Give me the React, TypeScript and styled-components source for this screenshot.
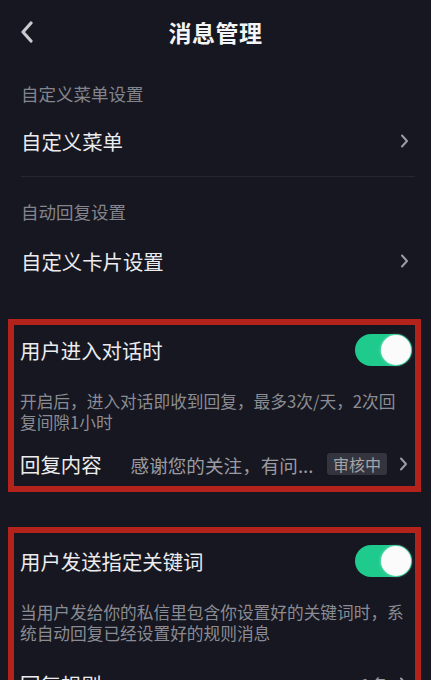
import styled, { createGlobalStyle } from "styled-components";

const GlobalStyle = createGlobalStyle`
  body {
    margin: 0;
    background: #161720;
    font-family: "Noto Sans CJK SC", "Noto Sans", sans-serif;
    color: #ececef;
  }
`;

function Chevron() {
  return (
    <svg width="9" height="14" viewBox="0 0 9 14">
      <path d="M2 1.5 L7 7 L2 12.5" fill="none" stroke="#9c9da3" strokeWidth="2" strokeLinecap="round" strokeLinejoin="round" />
    </svg>
  );
}

function Toggle() {
  return (
    <Switch>
      <Knob />
    </Switch>
  );
}

export default function App() {
  return (
    <Page>
      <GlobalStyle />
      <Header>
        <BackButton>
          <svg width="14" height="22" viewBox="0 0 14 22">
            <path d="M11 2 L3 11 L11 20" fill="none" stroke="#c9c9ce" strokeWidth="3.2" strokeLinecap="round" strokeLinejoin="round" />
          </svg>
        </BackButton>
        <Title>消息管理</Title>
      </Header>

      <SectionLabel>自定义菜单设置</SectionLabel>
      <NavRow>
        <span>自定义菜单</span>
        <Chevron />
      </NavRow>
      <Divider />
      <SectionLabel $top={8}>自动回复设置</SectionLabel>
      <NavRow $height={48}>
        <span>自定义卡片设置</span>
        <Chevron />
      </NavRow>

      <Highlight $top={34}>
        <SwitchRow $height={50}>
          <span>用户进入对话时</span>
          <Toggle />
        </SwitchRow>
        <Description $top={16}>
          开启后，进入对话即收到回复，最多3次/天，2次回复间隙1小时
        </Description>
        <DetailRow $top={11}>
          <RowLabel>回复内容</RowLabel>
          <RowValue>感谢您的关注，有问...</RowValue>
          <Badge>审核中</Badge>
          <Chevron />
        </DetailRow>
      </Highlight>

      <Highlight $top={35}>
        <SwitchRow $height={56}>
          <span>用户发送指定关键词</span>
          <Toggle />
        </SwitchRow>
        <Description $top={13}>
          当用户发给你的私信里包含你设置好的关键词时，系统自动回复已经设置好的规则消息
        </Description>
        <DetailRow $top={20}>
          <RowLabel>回复规则</RowLabel>
          <RowValue $align="right">1条</RowValue>
          <Chevron />
        </DetailRow>
      </Highlight>
    </Page>
  );
}

const Page = styled.div`
  width: 431px;
  height: 680px;
  overflow: hidden;
  background: #161720;
`;

const Header = styled.div`
  height: 66px;
  display: flex;
  align-items: center;
  justify-content: center;
  position: relative;
`;

const BackButton = styled.div`
  position: absolute;
  left: 20px;
  top: 21px;
  display: flex;
`;

const Title = styled.div`
  font-size: 23px;
  font-weight: 700;
  color: #f4f4f6;
  letter-spacing: 0.5px;
  padding-bottom: 3px;
`;

const SectionLabel = styled.div<{ $top?: number }>`
  height: 52px;
  margin-top: ${(p) => p.$top ?? 1}px;
  padding-left: 21px;
  display: flex;
  align-items: center;
  font-size: 17.5px;
  color: #84858c;
`;

const NavRow = styled.div<{ $height?: number }>`
  height: ${(p) => p.$height ?? 44}px;
  padding: 0 22px 0 21px;
  display: flex;
  align-items: center;
  justify-content: space-between;
  font-size: 20.4px;
  color: #ececef;
`;

const Divider = styled.div`
  height: 1px;
  margin: 13px 16px 0 21px;
  background: #262731;
`;

const Highlight = styled.div<{ $top: number }>`
  margin: ${(p) => p.$top}px 10px 0 8px;
  border: 6px solid #b4221c;
  padding: 0 3px 2px 6px;
`;

const SwitchRow = styled.div<{ $height: number }>`
  height: ${(p) => p.$height}px;
  display: flex;
  align-items: center;
  justify-content: space-between;
  font-size: 20.4px;
  color: #ececef;
`;

const Switch = styled.div`
  width: 57px;
  height: 32px;
  border-radius: 16px;
  background: #1fcb8c;
  display: flex;
  align-items: center;
  justify-content: flex-end;
  padding-right: 1px;
  box-sizing: border-box;
`;

const Knob = styled.div`
  width: 30px;
  height: 30px;
  border-radius: 50%;
  background: #fbfbfb;
  box-shadow: 0 0 3px rgba(255, 255, 255, 0.6);
`;

const Description = styled.div<{ $top: number }>`
  margin-top: ${(p) => p.$top}px;
  padding-right: 6px;
  font-size: 16.7px;
  line-height: 21px;
  color: #8b8c93;
`;

const DetailRow = styled.div<{ $top: number }>`
  margin-top: ${(p) => p.$top}px;
  height: 40px;
  display: flex;
  align-items: center;
  padding-right: 4px;
  white-space: nowrap;
`;

const RowLabel = styled.span`
  flex-shrink: 0;
  font-size: 20.4px;
  color: #ececef;
`;

const RowValue = styled.span<{ $align?: "left" | "right" }>`
  flex: 1;
  min-width: 0;
  overflow: hidden;
  margin: 0 10px 0 29px;
  font-size: 18.6px;
  color: #9a9ba2;
  text-align: ${(p) => p.$align ?? "left"};
`;

const Badge = styled.span`
  flex-shrink: 0;
  height: 22px;
  padding: 0 6px;
  margin-right: 12px;
  border-radius: 3px;
  background: #33343d;
  color: #a3a4aa;
  font-size: 16px;
  line-height: 22px;
`;
